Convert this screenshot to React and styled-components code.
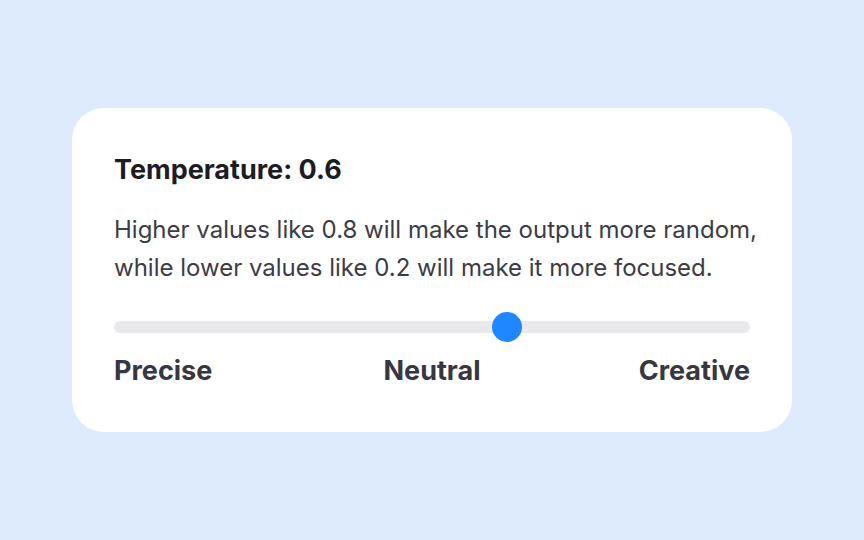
import React from 'react';
import styled, { createGlobalStyle } from 'styled-components';

const GlobalStyle = createGlobalStyle`
	html, body, #root {
		margin: 0;
		height: 100%;
	}
	body {
		background: #deebfd;
		font-family: 'Inter', 'Noto Sans', sans-serif;
	}
`;

const Page = styled.main`
	height: 100%;
	display: flex;
	align-items: center;
	justify-content: center;
`;

const Card = styled.section`
	width: 720px;
	height: 324px;
	box-sizing: border-box;
	padding: 44px 42px 0 42px;
	background: #fff;
	border-radius: 32px;
`;

const Title = styled.h2`
	margin: 0;
	font-size: 27px;
	line-height: 36px;
	font-weight: 700;
	color: #1c1c24;
`;

const Description = styled.p`
	margin: 23px 0 0;
	font-size: 24px;
	line-height: 38px;
	color: #3c3c46;
	white-space: nowrap;
`;

const Track = styled.div`
	position: relative;
	margin-top: 34px;
	height: 12px;
	border-radius: 6px;
	background: #e9e9ec;
`;

const Thumb = styled.div`
	position: absolute;
	top: 50%;
	width: 30px;
	height: 30px;
	border-radius: 50%;
	background: #1f87ff;
	transform: translate(-50%, -50%);
`;

const Labels = styled.div`
	display: grid;
	grid-template-columns: 1fr auto 1fr;
	margin-top: 20px;
	font-size: 27px;
	line-height: 36px;
	font-weight: 700;
	color: #373741;
`;

const Label = styled.span`
	text-align: ${p => p.$align};
`;

export default function App() {
	const value = 0.6;
	// thumb sits a little past the raw ratio, like the original control
	const pos = value * 103;

	return (
		<>
			<GlobalStyle />
			<Page>
				<Card>
					<Title>Temperature: {value}</Title>
					<Description>
						Higher values like 0.8 will make the output more random,
						<br />
						while lower values like 0.2 will make it more focused.
					</Description>
					<Track>
						<Thumb style={{ left: `${pos}%` }} />
					</Track>
					<Labels>
						<Label $align='left'>Precise</Label>
						<Label $align='center'>Neutral</Label>
						<Label $align='right'>Creative</Label>
					</Labels>
				</Card>
			</Page>
		</>
	);
}
